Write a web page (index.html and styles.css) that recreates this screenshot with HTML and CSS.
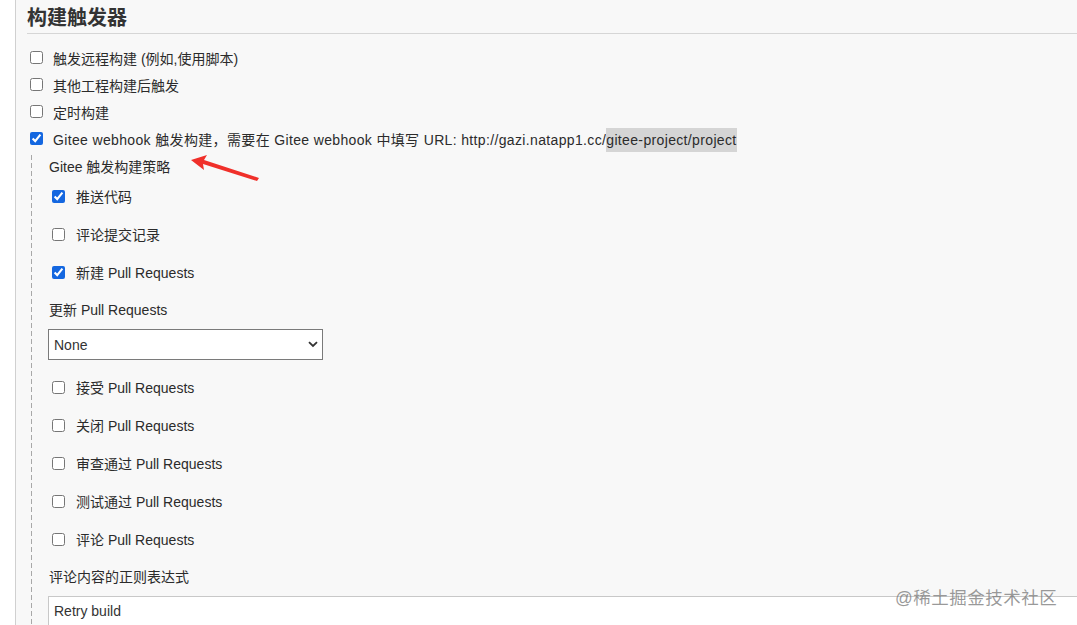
FILE: index.html
```html
<!DOCTYPE html>
<html>
<head>
  <meta charset="utf-8">
  <title>构建触发器</title>
  <link rel="stylesheet" href="styles.css">
</head>
<body>
  <div class="page">
    <h2 class="section-title">构建触发器</h2>

    <div class="triggers">
      <label class="row"><input type="checkbox"> <span>触发远程构建 (例如,使用脚本)</span></label>
      <label class="row"><input type="checkbox"> <span>其他工程构建后触发</span></label>
      <label class="row"><input type="checkbox"> <span>定时构建</span></label>
      <label class="row"><input type="checkbox" checked> <span class="url-line">Gitee webhook 触发构建，需要在 Gitee webhook 中填写 URL: http://gazi.natapp1.cc/<span class="mark">gitee-project/project</span></span></label>
    </div>

    <div class="nested">
      <div class="field-label first">Gitee 触发构建策略</div>
      <label class="sub-row"><input type="checkbox" checked> <span>推送代码</span></label>
      <label class="sub-row"><input type="checkbox"> <span>评论提交记录</span></label>
      <label class="sub-row"><input type="checkbox" checked> <span>新建 Pull Requests</span></label>

      <div class="field-label">更新 Pull Requests</div>
      <div class="select-wrap">
        <select class="select">
          <option>None</option>
        </select>
        <svg class="chevron" width="10" height="7" viewBox="0 0 10 7">
          <path d="M1 1.2 L5 5 L9 1.2" fill="none" stroke="#333" stroke-width="1.8"/>
        </svg>
      </div>

      <label class="sub-row"><input type="checkbox"> <span>接受 Pull Requests</span></label>
      <label class="sub-row"><input type="checkbox"> <span>关闭 Pull Requests</span></label>
      <label class="sub-row"><input type="checkbox"> <span>审查通过 Pull Requests</span></label>
      <label class="sub-row"><input type="checkbox"> <span>测试通过 Pull Requests</span></label>
      <label class="sub-row"><input type="checkbox"> <span>评论 Pull Requests</span></label>

      <div class="field-label">评论内容的正则表达式</div>
      <input class="text-input" type="text" value="Retry build">
    </div>
  </div>

  <!-- annotation arrow drawn over the screenshot -->
  <svg class="arrow" width="80" height="34" viewBox="0 0 80 34">
    <polygon points="1,6 17,1 14,6 69,24 67,27 13,10 14,16" fill="#f0302a"/>
  </svg>

  <div class="watermark">@稀土掘金技术社区</div>
</body>
</html>
```

FILE: styles.css
```css
body {
  margin: 0;
  background-color: #fff;
  font-family: "Liberation Sans", "Noto Sans CJK SC", Arial, sans-serif;
  color: #2b2b2b;
  overflow: hidden;
  height: 625px;
  position: relative;
}

.page {
  margin-left: 15px;
  border-left: 1px solid #d0d0d0;
  background-color: #f8f8f8;
  min-height: 625px;
  padding-left: 11px;
}

.section-title {
  margin: 0;
  padding-top: 3px;
  line-height: 30px;
  font-size: 20px;
  font-weight: bold;
  color: #333;
  border-bottom: 1px solid #d6d6d6;
}

.triggers {
  padding-top: 10px;
}

.row {
  display: flex;
  align-items: center;
  height: 27px;
  padding-left: 3px;
  font-size: 14px;
  white-space: nowrap;
}

.url-line {
  letter-spacing: 0.35px;
}

input[type="checkbox"] {
  width: 13px;
  height: 13px;
  margin: 0 10px 0 0;
  accent-color: #1467e0;
}

.mark {
  background-color: #d5d5d5;
  padding: 4px 0;
}

.nested {
  margin-left: 4px;
  padding-left: 18px;
  padding-top: 5px;
  background-image: repeating-linear-gradient(to bottom, #a8a8a8 0, #a8a8a8 5px, transparent 5px, transparent 8px);
  background-size: 1px 100%;
  background-repeat: no-repeat;
  background-position: 0 3px;
  min-height: 470px;
}

.field-label {
  height: 20px;
  line-height: 20px;
  font-size: 14px;
  margin-top: 9px;
  margin-bottom: 9px;
}

.field-label.first {
  margin-top: 0;
  margin-bottom: 0;
}

.sub-row {
  display: flex;
  align-items: center;
  height: 38px;
  padding-left: 3px;
  font-size: 14px;
}

.sub-row input[type="checkbox"] {
  margin-right: 11px;
}

.select-wrap {
  position: relative;
  width: 275px;
  height: 31px;
  margin-left: -1px;
  margin-bottom: 8px;
}

.select {
  display: block;
  appearance: none;
  -webkit-appearance: none;
  width: 275px;
  height: 31px;
  border: 1px solid #7a7a7a;
  border-radius: 0;
  background-color: #fff;
  font-family: inherit;
  font-size: 14px;
  color: #333;
  padding: 0 5px;
  margin: 0;
}

.chevron {
  position: absolute;
  right: 5px;
  top: 12px;
}

.text-input {
  display: block;
  width: 1100px;
  height: 34px;
  margin: 7px 0 0 -1px;
  border: 1px solid #c8c8c8;
  background-color: #fff;
  font-family: inherit;
  font-size: 14px;
  color: #333;
  padding: 0 5px 4px;
  box-sizing: border-box;
}

.arrow {
  position: absolute;
  left: 190px;
  top: 154px;
}

.watermark {
  position: absolute;
  left: 895px;
  top: 584px;
  font-size: 17.5px;
  color: rgba(120, 120, 120, 0.75);
  letter-spacing: 0.5px;
  white-space: nowrap;
}
```
